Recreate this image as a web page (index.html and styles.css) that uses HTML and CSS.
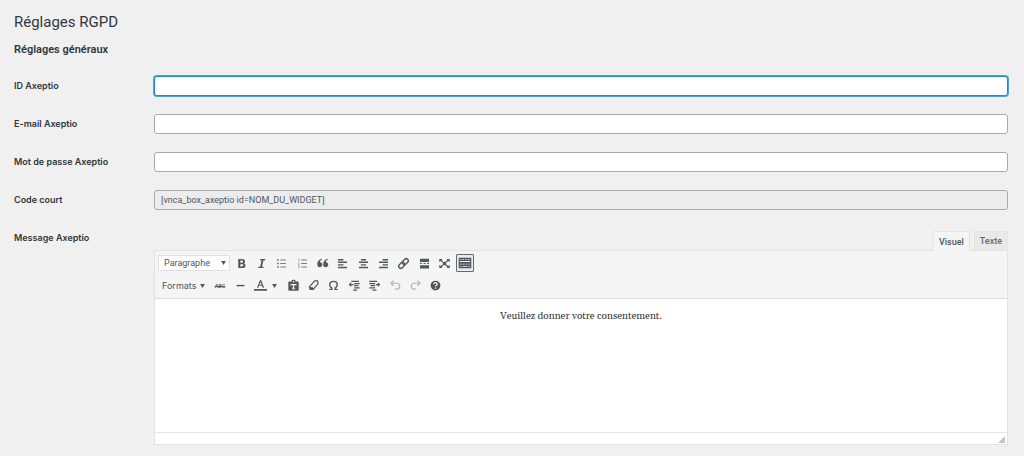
FILE: index.html
```html
<!DOCTYPE html>
<html lang="fr">
<head>
<meta charset="utf-8">
<title>Réglages RGPD</title>
<link rel="stylesheet" href="styles.css">
</head>
<body>
<main class="page">
  <h1 class="page-title">Réglages RGPD</h1>
  <h2 class="section-title">Réglages généraux</h2>
  <form class="settings">
    <div class="row">
      <label class="row-label" for="ax-id">ID Axeptio</label>
      <input class="field field-active" id="ax-id" type="text">
    </div>
    <div class="row">
      <label class="row-label" for="ax-mail">E-mail Axeptio</label>
      <input class="field" id="ax-mail" type="email">
    </div>
    <div class="row">
      <label class="row-label" for="ax-pass">Mot de passe Axeptio</label>
      <input class="field" id="ax-pass" type="password">
    </div>
    <div class="row">
      <label class="row-label" for="ax-code">Code court</label>
      <input class="field field-readonly" id="ax-code" type="text" readonly value="[vnca_box_axeptio id=NOM_DU_WIDGET]">
    </div>
    <div class="row row-editor">
      <span class="row-label" id="msg-label">Message Axeptio</span>
      <div class="editor">
        <div class="tabs">
          <button class="tab tab-on" type="button">Visuel</button>
          <button class="tab" type="button">Texte</button>
        </div>
        <div class="editor-box">
          <div class="toolbar">
            <div class="tools">
              <div class="select-wrap">
                <select class="format-select" aria-label="Style de paragraphe"><option>Paragraphe</option></select>
                <svg class="caret" viewBox="0 0 6 5"><path d="M0 0h6L3 5z"/></svg>
              </div>
              <div class="icons icons-top">
                <button class="tool" type="button" aria-label="Gras"><svg viewBox="0 0 20 20"><path fill-rule="evenodd" d="M5 3h6c3 0 4.500 1.500 4.500 3.700 0 1.400-.8 2.500-2 3 1.700.4 2.700 1.600 2.700 3.300C16.200 15.600 14.300 17 11.300 17H5zM8.200 5.400v3.300h2.400c1.200 0 1.800-.6 1.800-1.700s-.7-1.600-1.900-1.600zM8.200 11v3.600h2.700c1.300 0 2-.6 2-1.800s-.7-1.800-2-1.800z"/></svg></button>
                <button class="tool" type="button" aria-label="Italique"><svg viewBox="0 0 20 20"><path d="M8 3h8l-.4 2h-2.500l-2.300 10h2.500l-.4 2h-8l.4-2h2.500l2.300-10H7.600z"/></svg></button>
                <button class="tool tool-light" type="button" aria-label="Liste à puces"><svg viewBox="0 0 20 20"><circle cx="4.500" cy="4.500" r="1.500"/><circle cx="4.500" cy="10" r="1.500"/><circle cx="4.500" cy="15.500" r="1.500"/><path d="M8 3.800h9v1.500H8zM8 9.300h9v1.500H8zM8 14.800h9v1.500H8z"/></svg></button>
                <button class="tool tool-light" type="button" aria-label="Liste numérotée"><svg viewBox="0 0 20 20"><path d="M8 3.800h9v1.500H8zM8 9.300h9v1.500H8zM8 14.800h9v1.500H8z"/><path class="line" d="M3.500 3.500 4.700 2.500V7M3 9.300c.6-.8 2.400-.7 2.200.5L3.200 12h2.400M3.100 14h2.200l-1.200 1.400c1.600 0 1.600 2.200-1.100 1.900"/></svg></button>
                <button class="tool" type="button" aria-label="Citation"><svg viewBox="0 0 20 20"><path d="M9 4.200C6.800 5 6 6.600 6 8.200c2.200-.3 3.800 1.300 3.800 3.600 0 2.200-1.600 3.900-3.900 3.900C3.300 15.700 2 13.600 2 11c0-4 2.500-7.500 7-8.300zM18 4.200c-2.200.8-3 2.400-3 4 2.200-.3 3.800 1.300 3.800 3.600 0 2.200-1.600 3.900-3.900 3.900-2.600 0-3.900-2.100-3.900-4.700 0-4 2.500-7.500 7-8.300z"/></svg></button>
                <button class="tool" type="button" aria-label="Aligner à gauche"><svg viewBox="0 0 20 20"><path d="M3 3h8.500v2.200H3zM3 7h14v2.200H3zM3 11h8.500v2.200H3zM3 15h14v2.200H3z"/></svg></button>
                <button class="tool" type="button" aria-label="Centrer"><svg viewBox="0 0 20 20"><path d="M6 3h8v2.200H6zM3 7h14v2.200H3zM6 11h8v2.200H6zM3 15h14v2.200H3z"/></svg></button>
                <button class="tool" type="button" aria-label="Aligner à droite"><svg viewBox="0 0 20 20"><path d="M8.500 3H17v2.200H8.500zM3 7h14v2.200H3zM8.500 11H17v2.200H8.500zM3 15h14v2.200H3z"/></svg></button>
                <button class="tool" type="button" aria-label="Lien"><svg viewBox="0 0 20 20"><g class="bold" transform="rotate(-45 10 10)"><rect x="1" y="6.800" width="10" height="6.400" rx="3.200"/><rect x="9" y="6.800" width="10" height="6.400" rx="3.200"/></g></svg></button>
                <button class="tool" type="button" aria-label="Lire la suite"><svg viewBox="0 0 20 20"><path d="M3 2.500h14v5H3zM3 9.200h3v1.600H3zM8.500 9.200h3v1.600h-3zM14 9.200h3v1.600h-3zM3 12.500h14v5H3z"/></svg></button>
                <button class="tool" type="button" aria-label="Plein écran"><svg viewBox="0 0 20 20"><path d="M2 3h5L5.500 4.700 8.500 7.200 7.200 8.500 4 6 2 8zM18 3h-5l1.500 1.700-3 2.500 1.300 1.300L16 6l2 2zM2 17h5l-1.500-1.700 3-2.500-1.300-1.300L4 14l-2-2zM18 17h-5l1.500-1.700-3-2.500 1.300-1.300L16 14l2-2zM7.500 7.500h5v5h-5z"/></svg></button>
                <button class="tool tool-on" type="button" aria-label="Permuter la barre d’outils" aria-pressed="true"><svg viewBox="0 0 20 20"><path fill-rule="evenodd" d="M1 2.500h18v15H1zM2.500 7.200v1.400h15V7.200zM3 4.200v1h2v-1zM6.500 4.200v1h2v-1zM10 4.200v1h2v-1zM13.500 4.200v1h3v-1zM3 10.900v1.200h2.500v-1.200zM7 10.900v1.200h2.500v-1.200zM11 10.900v1.200h2.500v-1.200zM15 10.900v1.200h2v-1.200zM3 14.500v1.200h2v-1.200zM6.500 14.500v1.200h7v-1.200zM15 14.500v1.200h2v-1.200z"/></svg></button>
              </div>
            </div>
            <div class="tools">
              <button class="formats" type="button">Formats <svg class="caret" viewBox="0 0 6 5"><path d="M0 0h6L3 5z"/></svg></button>
              <div class="icons icons-start">
                <button class="tool tool-abc" type="button" aria-label="Barré"><s>ABC</s></button>
                <button class="tool" type="button" aria-label="Ligne horizontale"><svg viewBox="0 0 20 20"><path d="M4 9h12v2.200H4z"/></svg></button>
                <button class="tool" type="button" aria-label="Couleur du texte"><svg viewBox="0 0 20 20"><path fill-rule="evenodd" d="M9 2h2.200l4.300 11.500h-2.200l-1-3H7.700l-1 3H4.600zM10 4.500 8.300 9h3.500zM0 15.500h20V18H0z"/></svg></button>
              </div>
              <button class="color-more" type="button" aria-label="Choisir une couleur"><svg class="caret" viewBox="0 0 6 5"><path d="M0 0h6L3 5z"/></svg></button>
              <div class="icons icons-end">
                <button class="tool" type="button" aria-label="Coller en texte"><svg viewBox="0 0 20 20"><path fill-rule="evenodd" d="M7 4V2.500C7 1.500 8 1 10 1s3 .5 3 1.500V4h3.500c1 0 1.500.5 1.500 1.500v11c0 1-.5 1.500-1.500 1.500h-13C2.500 18 2 17.500 2 16.500v-11C2 4.500 2.500 4 3.500 4zM8.800 3v2h2.400V3zM5.500 7.500v3h1.300V9.300h2.100v5.200H7.500v1.300h5v-1.300h-1.400V9.300h2.100v1.200h1.300v-3z"/></svg></button>
                <button class="tool" type="button" aria-label="Supprimer la mise en forme"><svg viewBox="0 0 20 20"><path class="stroke" d="M11.800 3h4.500l.8 4L9.500 16H5l-1.300-3.800z"/><path d="M3.500 12.200 9 12.500l1 3.300L9 17H4.800z"/></svg></button>
                <button class="tool" type="button" aria-label="Caractère spécial"><svg viewBox="0 0 20 20"><path class="bold" d="M3.500 16h4v-2C5.300 12.800 4.200 11 4.200 8.800 4.200 5.700 6.600 3.700 10 3.700s5.800 2 5.800 5.100c0 2.200-1.100 4-3.300 5.200v2h4"/></svg></button>
                <button class="tool" type="button" aria-label="Diminuer le retrait"><svg viewBox="0 0 20 20"><path d="M5 2.500h12v2H5zM9.500 6H18v2H9.500zM9.500 9.300H16v2H9.500zM9.500 12.600H18v2H9.500zM8 16h6v2H8zM1 8.500 5 5v2.500h3.500v2.200H5v2.500z"/></svg></button>
                <button class="tool" type="button" aria-label="Augmenter le retrait"><svg viewBox="0 0 20 20"><path d="M2 2.500h12v2H2zM2 6h9v2H2zM4 9.300h7v2H4zM2 12.600h9v2H2zM7 16h6v2H7zM19 8.500 15 5v2.500h-3v2.200h3v2.500z"/></svg></button>
                <button class="tool tool-off" type="button" disabled aria-label="Annuler"><svg viewBox="0 0 20 20"><path class="stroke" d="M7 2.500 3 6.500l4 4M3.500 6.500H12c6 0 6 9 0 9H9"/></svg></button>
                <button class="tool tool-off" type="button" disabled aria-label="Rétablir"><svg viewBox="0 0 20 20"><path class="stroke" d="m13 2.500 4 4-4 4M16.500 6.500H8c-6 0-6 9 0 9h3"/></svg></button>
                <button class="tool" type="button" aria-label="Raccourcis clavier"><svg viewBox="0 0 20 20"><circle cx="10" cy="10" r="7.500"/><path class="knock" d="M7.500 8c0-3.500 5.200-3.200 5 0 0 1.700-2.400 1.700-2.400 3.700M10.100 13v1.900"/></svg></button>
              </div>
            </div>
          </div>
          <div class="content" contenteditable="true" role="textbox" aria-labelledby="msg-label" spellcheck="false">Veuillez donner votre consentement.</div>
          <div class="status"><svg class="grip" viewBox="0 0 7 7"><path d="M7 0v7H0z"/></svg></div>
        </div>
      </div>
    </div>
  </form>
</main>
</body>
</html>
```
FILE: styles.css
```css
* { box-sizing: border-box; }
body {
  margin: 0;
  background: #f0f0f0;
  color: #3c434a;
  font: 9px/12px Inter, Roboto, sans-serif;
}
.page { padding: 12px 16px 11px 14px; }
.page-title { margin: 0; font: 400 15px/20px Roboto, sans-serif; color: #32373c; }
.section-title { margin: 10px 0 0; font: 600 11px/16px Roboto, sans-serif; color: #32373c; }
.settings { display: grid; gap: 18px; padding-top: 18px; }
.row { display: grid; grid-template-columns: 140px minmax(0, 1fr); align-items: center; }
.row-editor { align-items: start; }
.row-label { font-weight: 600; color: #32373c; }
.row-editor .row-label { padding-top: 4px; }
.field {
  width: 100%;
  height: 20px;
  margin: 0;
  padding: 0 6px;
  border: 1px solid #a7aaad;
  border-radius: 3px;
  background: #fff;
  color: #50575e;
  font: inherit;
  outline: none;
}
.field-active { border-color: #1e8cbe; box-shadow: 0 0 0 1px #4aa5d4; }
.field-readonly { background: #ececec; font-family: Roboto, sans-serif; }

button { margin: 0; padding: 0; border: 0; background: none; color: inherit; font: inherit; }
.tabs { display: flex; justify-content: flex-end; gap: 4px; }
.tab {
  height: 19px;
  padding: 0 5px;
  border: 1px solid #e5e5e5;
  border-bottom: 0;
  background: #e9e9e9;
  color: #646970;
  font-family: Roboto, sans-serif;
  font-weight: 500;
}
.tab-on { position: relative; z-index: 1; margin-bottom: -1px; height: 20px; background: #f5f5f5; color: #50575e; }
.editor { padding-top: 3px; }
.editor-box { border: 1px solid #e3e3e3; background: #fff; }
.toolbar {
  display: grid;
  gap: 4px;
  padding: 3px;
  border-bottom: 1px solid #dcdcdc;
  background: #f5f5f5;
}
.tools { display: flex; align-items: center; height: 18px; }
.tools + .tools { height: 19px; }
.select-wrap { position: relative; width: 72px; }
.format-select {
  appearance: none;
  display: block;
  width: 100%;
  height: 16px;
  margin: 0;
  padding: 0 5px;
  border: 1px solid #e0e0e0;
  border-radius: 0;
  background: #fff;
  color: #50575e;
  font: 9px/12px Roboto, sans-serif;
}
.caret { width: 5px; height: 4px; fill: #50575e; }
.select-wrap .caret { position: absolute; right: 4px; top: 6px; pointer-events: none; }
.icons { display: flex; justify-content: space-between; }
.icons-top { width: 242px; margin-left: 2px; }
.icons-start { width: 58px; margin-left: 3px; }
.icons-end { width: 161px; margin-left: 5px; }
.formats { display: flex; align-items: center; gap: 4px; width: 50px; padding-left: 4px; color: #50575e; }
.color-more { display: flex; width: 10px; justify-content: center; }
.tool { display: flex; align-items: center; justify-content: center; width: 18px; height: 18px; }
.tool svg { width: 13px; height: 13px; fill: #50575e; }
.tool-on { border: 1px solid #646970; border-radius: 1px; background: #ebebeb; }
.tool-on svg { flex: none; width: 14px; height: 14px; }
.tool-light { opacity: 0.75; }
.tool-abc { font-size: 5px; font-weight: 600; color: #50575e; }
.tool-off { opacity: 0.4; }
.tool .line, .tool .stroke, .tool .bold, .tool .knock { fill: none; stroke: #50575e; }
.tool .line { stroke-width: 0.8; }
.tool .stroke { stroke-width: 1.8; }
.tool .bold { stroke-width: 2.2; }
.tool .knock { stroke: #f5f5f5; stroke-width: 2; }
.content {
  min-height: 133px;
  padding: 10px;
  outline: none;
  text-align: center;
  font: 10px/14px Georgia, Gelasio, "Liberation Serif", serif;
  color: #32373c;
}
.status { display: flex; align-items: flex-end; justify-content: flex-end; height: 12px; padding: 1px 2px; border-top: 1px solid #e5e5e5; }
.grip { width: 7px; height: 7px; fill: #c3c4c7; }
```
